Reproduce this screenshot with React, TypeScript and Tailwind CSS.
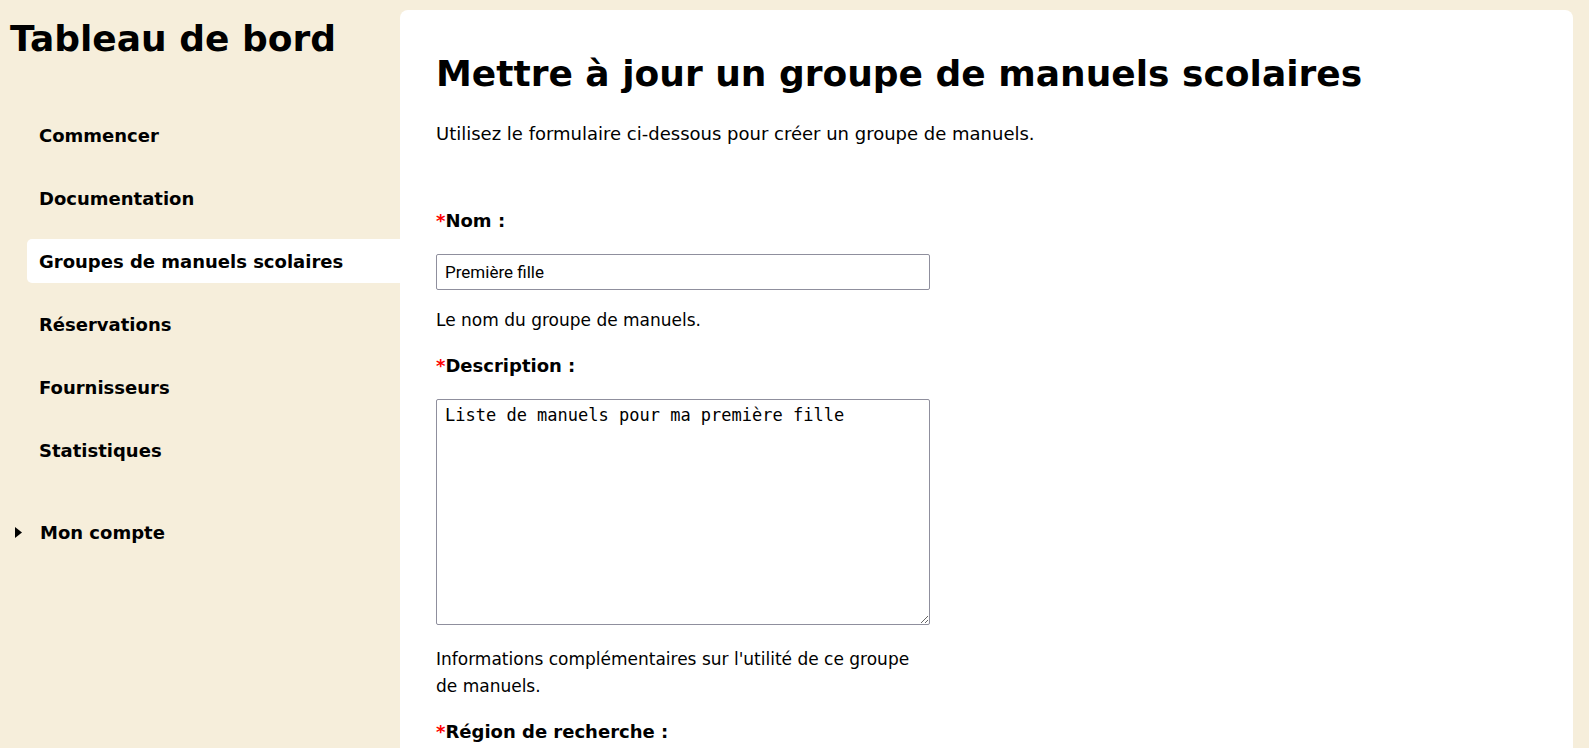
import { useState } from "react";

const navItems = [
  "Commencer",
  "Documentation",
  "Groupes de manuels scolaires",
  "Réservations",
  "Fournisseurs",
  "Statistiques",
];

function Required({ children }: { children: React.ReactNode }) {
  return (
    <label className="block text-[18px] font-bold leading-[26px]">
      <span className="text-[#ff0000]">*</span>
      {children}
    </label>
  );
}

export default function App() {
  const [name, setName] = useState("Première fille");
  const [desc, setDesc] = useState("Liste de manuels pour ma première fille");
  const active = "Groupes de manuels scolaires";

  return (
    <div className="flex min-h-screen bg-[#f6eedb] font-['DejaVu_Sans',sans-serif] text-black">
      <aside className="w-[400px] shrink-0">
        <h1 className="pl-[10px] pt-[17px] text-[36px] font-bold leading-[43px]">
          Tableau de bord
        </h1>
        <nav className="mt-[53px] flex flex-col gap-[19px] pl-[27px]">
          {navItems.map((item) => (
            <a
              key={item}
              href="#"
              className={
                "flex h-[44px] items-center rounded-l-[5px] pl-[12px] text-[18px] font-bold " +
                (item === active ? "bg-white" : "")
              }
            >
              {item}
            </a>
          ))}
        </nav>
        <details className="mt-[47px] pl-[15px]">
          <summary className="flex cursor-pointer list-none items-center text-[18px] font-bold [&::-webkit-details-marker]:hidden">
            <svg width="8" height="11" viewBox="0 0 8 11" className="mr-[17px]">
              <path d="M0 0 L7 5.5 L0 11 Z" fill="black" />
            </svg>
            Mon compte
          </summary>
        </details>
      </aside>

      <main className="mt-[10px] mr-[16px] flex-1 rounded-t-lg bg-white pl-[36px] pt-[42px]">
        <h1 className="text-[36px] font-bold leading-[43px]">
          Mettre à jour un groupe de manuels scolaires
        </h1>
        <p className="mt-[25px] text-[18px] leading-[27px]">
          Utilisez le formulaire ci-dessous pour créer un groupe de manuels.
        </p>

        <form className="mt-[61px] w-[494px]" onSubmit={(e) => e.preventDefault()}>
          <Required>Nom :</Required>
          <input
            value={name}
            onChange={(e) => setName(e.target.value)}
            className="mt-[20px] block h-[36px] w-full rounded-[2px] border border-[#8f8f9d] px-[8px] font-['Roboto',sans-serif] text-[17px]"
          />
          <p className="mt-[17px] text-[17px] leading-[27px]">Le nom du groupe de manuels.</p>

          <div className="mt-[19px]">
            <Required>Description :</Required>
          </div>
          <textarea
            value={desc}
            onChange={(e) => setDesc(e.target.value)}
            className="mt-[20px] block h-[226px] w-full rounded-[2px] border border-[#8f8f9d] px-[8px] py-[4px] font-['DejaVu_Sans_Mono',monospace] text-[17px] leading-[22px]"
          />
          <p className="mt-[21px] text-[17px] leading-[27px]">
            Informations complémentaires sur l'utilité de ce groupe de manuels.
          </p>

          <div className="mt-[19px]">
            <Required>Région de recherche :</Required>
          </div>
        </form>
      </main>
    </div>
  );
}
